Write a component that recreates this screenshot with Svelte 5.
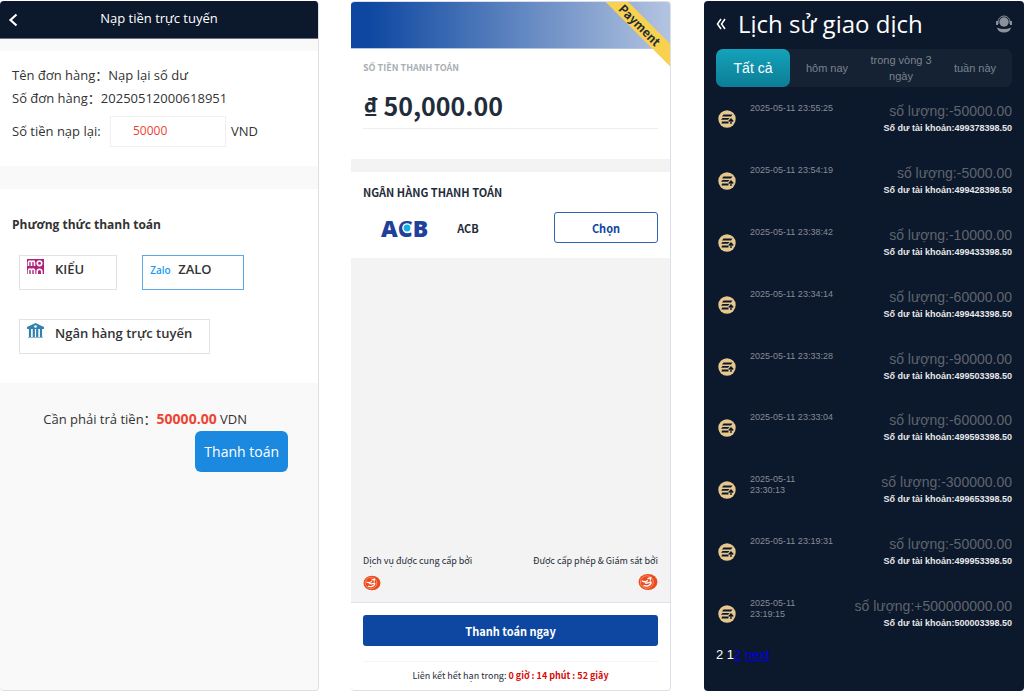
<script>
  const methods = [
    { id: 'momo', label: 'KIỂU' },
    { id: 'zalo', label: 'ZALO' },
    { id: 'bank', label: 'Ngân hàng trực tuyến' }
  ];

  const tabs = ['Tất cả', 'hôm nay', 'trong vòng 3 ngày', 'tuần này'];

  const history = [
    { time: '2025-05-11 23:55:25', amount: '-50000.00', balance: '499378398.50' },
    { time: '2025-05-11 23:54:19', amount: '-5000.00', balance: '499428398.50' },
    { time: '2025-05-11 23:38:42', amount: '-10000.00', balance: '499433398.50' },
    { time: '2025-05-11 23:34:14', amount: '-60000.00', balance: '499443398.50' },
    { time: '2025-05-11 23:33:28', amount: '-90000.00', balance: '499503398.50' },
    { time: '2025-05-11 23:33:04', amount: '-60000.00', balance: '499593398.50' },
    { time: '2025-05-11 23:30:13', amount: '-300000.00', balance: '499653398.50' },
    { time: '2025-05-11 23:19:31', amount: '-50000.00', balance: '499953398.50' },
    { time: '2025-05-11 23:19:15', amount: '+500000000.00', balance: '500003398.50' }
  ];

  let amount = $state('50000');
  let method = $state('zalo');
  let tab = $state(0);
</script>

{#snippet seal(size)}
  <svg width={size} height={size - 2} viewBox="0 0 18 16" aria-hidden="true">
    <ellipse cx="9" cy="8" rx="8.500" ry="7.300" fill="#ea4a1c" />
    <ellipse cx="8" cy="8" rx="5.800" ry="5.600" fill="none" stroke="#f7a688" stroke-width="0.700" />
    <path d="M3.500 7c2 1.200 4 .6 5.500-.6M8.500 5l3-.8-.5 2.500M6 8.500c2 .8 4 .4 6-.8M5 11c2.500 1.200 6 .8 7-2.500" fill="none" stroke="#fff" stroke-width="1.200" />
  </svg>
{/snippet}

<main class="screens">
  <section class="panel recharge">
    <header class="bar">
      <button type="button" class="back" aria-label="Quay lại">
        <svg width="10" height="14" viewBox="0 0 10 14"><path d="M8.500 1.500 2.500 7l6 5.500" fill="none" stroke="#fff" stroke-width="2.200" /></svg>
      </button>
      <h1>Nạp tiền trực tuyến</h1>
    </header>

    <div class="block order">
      <p class="line"><span>Tên đơn hàng：</span><span>Nạp lại số dư</span></p>
      <p class="line"><span>Số đơn hàng：</span><span>20250512000618951</span></p>
      <div class="line money">
        <label for="amount">Số tiền nạp lại:</label>
        <input id="amount" type="text" bind:value={amount} />
        <span>VND</span>
      </div>
    </div>

    <div class="block methods">
      <h2>Phương thức thanh toán</h2>
      <div class="options">
        {#each methods as m}
          <button type="button" class="option" class:selected={method === m.id} aria-pressed={method === m.id} onclick={() => (method = m.id)}>
            <span class="logo">
              {#if m.id === 'momo'}
                <svg width="17" height="15" viewBox="0 0 17 15" aria-hidden="true">
                  <rect width="17" height="15" fill="#b0227a" />
                  <g fill="none" stroke="#fff" stroke-width="1.600">
                    <path d="M1.500 7V3.500q0-1.500 1.500-1.500t1.500 1.500V7M4.500 3.500Q4.500 2 6 2t1.500 1.500V7M1.500 15v-3.500q0-1.500 1.500-1.500t1.500 1.500V15M4.500 11.500q0-1.500 1.500-1.500t1.500 1.500V15" />
                    <circle cx="12.500" cy="4.300" r="2.300" />
                    <path d="M10.200 15v-2.500a2.300 2.300 0 0 1 4.600 0V15" />
                  </g>
                </svg>
              {:else if m.id === 'zalo'}
                <span class="zalo">Zalo</span>
              {:else}
                <svg width="17" height="15" viewBox="0 0 17 15" aria-hidden="true">
                  <path d="M8.500 0 17 4v2H0V4z" fill="#3382ad" />
                  <path d="M3 5v9M6.800 5v9M10.200 5v9M14 5v9" stroke="#3382ad" stroke-width="2.200" />
                  <path d="M1 14.500h15" stroke="#8fb9d0" />
                  <circle cx="8.500" cy="3.500" r="1.300" fill="#fff" />
                </svg>
              {/if}
            </span>
            {m.label}
          </button>
        {/each}
      </div>
    </div>

    <div class="total">
      <p>Cần phải trả tiền：<strong>50000.00</strong> VDN</p>
      <button type="button" class="submit">Thanh toán</button>
    </div>
  </section>

  <section class="panel checkout">
    <div class="banner">
      <div class="ribbon">Payment</div>
    </div>

    <div class="block sum">
      <h2>SỐ TIỀN THANH TOÁN</h2>
      <p class="price">₫ 50,000.00</p>
    </div>

    <div class="block bank">
      <h2>NGÂN HÀNG THANH TOÁN</h2>
      <div class="bank-row">
        <div class="acb">
          ACB
          <svg class="acb-dot" width="10" height="10" viewBox="0 0 10 10" aria-hidden="true">
            <circle cx="5" cy="5" r="4.800" fill="#fff" />
            <circle cx="5" cy="5" r="3.400" fill="#12aeea" />
          </svg>
        </div>
        <span class="bank-name">ACB</span>
        <button type="button" class="choose">Chọn</button>
      </div>
    </div>

    <div class="providers">
      <div class="provider">
        <span>Dịch vụ được cung cấp bởi</span>
        {@render seal(18)}
      </div>
      <div class="provider right">
        <span>Được cấp phép &amp; Giám sát bởi</span>
        {@render seal(20)}
      </div>
    </div>

    <footer class="pay">
      <button type="button" class="pay-now">Thanh toán ngay</button>
      <p class="expires">Liên kết hết hạn trong: <strong>0 giờ : 14 phút : 52 giây</strong></p>
    </footer>
  </section>

  <section class="panel history">
    <header class="top">
      <button type="button" class="back" aria-label="Quay lại">
        <svg width="10" height="14" viewBox="0 0 10 14"><path d="M5 2 1.500 7 5 12M9 2 5.500 7 9 12" fill="none" stroke="#fff" stroke-width="1.500" /></svg>
      </button>
      <h1>Lịch sử giao dịch</h1>
      <button type="button" class="support" aria-label="Hỗ trợ">
        <svg width="16" height="18" viewBox="0 0 16 18">
          <circle cx="8" cy="7" r="4.700" fill="#8b919b" />
          <path d="M2 9V7a6 6 0 0 1 12 0v2" fill="none" stroke="#8b919b" />
          <path d="M0 6h2v4H0zM14 6h2v4h-2zM1 12.500q7 3 14 0-1 5-7 5t-7-5" fill="#8b919b" />
        </svg>
      </button>
    </header>

    <nav class="tabs">
      {#each tabs as label, i}
        <button type="button" class="tab" class:active={tab === i} onclick={() => (tab = i)}>{label}</button>
      {/each}
    </nav>

    <ul class="records">
      {#each history as item}
        <li class="record">
          <svg class="coin" width="18" height="18" viewBox="0 0 18 18" aria-hidden="true">
            <circle cx="9" cy="9" r="8.700" fill="#e6c88f" />
            <path d="M5.500 4.500h9l-1.500 2H4zM4.500 8h7l-1.500 1.800H3zM4 11.500h6.500v2H3.500z" fill="#0c182b" />
            <path d="M13 14V9.500M10.800 11.500 13 9l2.200 2.500" fill="none" stroke="#0c182b" stroke-width="1.400" />
          </svg>
          <time>{item.time}</time>
          <div class="figures">
            <span class="amount">số lượng:{item.amount}</span>
            <span class="balance">Số dư tài khoản:{item.balance}</span>
          </div>
        </li>
      {/each}
    </ul>

    <div class="pager">2 1<a href="#2">2</a> <a href="#next">next</a></div>
  </section>
</main>

<style>
  :global(body) {
    margin: 0;
    background: #fff;
  }

  h1,
  h2,
  p,
  ul {
    margin: 0;
    padding: 0;
  }

  button,
  input {
    font-family: inherit;
    box-sizing: border-box;
    margin: 0;
  }

  button {
    cursor: pointer;
  }

  svg {
    display: block;
    flex: none;
  }

  .screens {
    display: grid;
    grid-template-columns: repeat(3, minmax(0, 1fr));
    gap: 32px;
    min-height: 100vh;
    box-sizing: border-box;
    padding: 1px 0 2px;
  }

  .panel {
    display: flex;
    flex-direction: column;
    box-sizing: border-box;
    border-radius: 4px;
    overflow: hidden;
  }

  .block {
    background: #fff;
  }

  .back,
  .support {
    background: none;
    border: none;
    padding: 0;
  }

  /* recharge form */
  .recharge {
    margin-right: 1px;
    background: #f9f9f9;
    border-right: 1px solid #dedfe5;
    border-bottom: 1px solid #dedfe5;
    font-family: 'Open Sans', 'Noto Sans CJK SC', sans-serif;
    font-size: 13px;
    line-height: 23px;
    color: #333;
  }

  .bar {
    display: grid;
    grid-template-columns: 10px 1fr 10px;
    align-items: center;
    height: 37px;
    padding: 0 8px;
    background: #0c182b;
    border-bottom: 1px solid #6d7480;
    margin-bottom: 12px;
  }

  .bar h1 {
    padding-bottom: 2px;
    font-size: 13px;
    font-weight: 400;
    color: #fff;
    text-align: center;
  }

  .order {
    padding: 13px 12px 19px;
    margin-bottom: 23px;
  }

  .line {
    display: flex;
    align-items: center;
  }

  .money {
    margin-top: 6px;
    gap: 5px;
  }

  .money label {
    min-width: 93px;
  }

  .money input {
    width: 116px;
    height: 31px;
    padding: 0 22px 3px;
    border: 1px solid #f0f0f0;
    font-size: 12px;
    color: #ee4433;
    outline: none;
  }

  .methods {
    padding: 24px 12px 29px;
  }

  .methods h2 {
    font-size: 12px;
    font-weight: 700;
  }

  .options {
    display: flex;
    flex-wrap: wrap;
    gap: 29px 25px;
    padding: 19px 7px 0;
  }

  .option {
    display: flex;
    align-items: flex-start;
    height: 35px;
    padding: 3px 17px 0 7px;
    background: #fff;
    border: 1px solid #e2e2e2;
    font-size: 13px;
    font-weight: 600;
    line-height: 21px;
    color: #333;
  }

  .option:first-child {
    padding-right: 32px;
  }

  .option.selected {
    padding-right: 31px;
    border-color: #5aa9e6;
  }

  .logo {
    width: 28px;
    text-align: left;
  }

  .zalo {
    font-size: 10px;
    color: #1b9af0;
  }

  .total {
    display: flex;
    flex-direction: column;
    align-items: flex-end;
    padding: 24px 30px 0;
  }

  .total p {
    margin-right: 41px;
  }

  .total strong {
    font-size: 14px;
    color: #ee4433;
  }

  .submit {
    height: 41px;
    padding: 0 9px;
    background: #1b89e0;
    border: none;
    border-radius: 6px;
    font-size: 14px;
    color: #fff;
  }

  /* bank checkout */
  .checkout {
    position: relative;
    background: #f3f3f3;
    border: 1px solid #dcdfe8;
    border-left: none;
    margin-left: -1px;
    margin-right: 1px;
    font-family: 'Noto Sans CJK SC', sans-serif;
    font-size: 9px;
    line-height: 16px;
    color: #1f2d3a;
  }

  .banner {
    height: 46px;
    background: linear-gradient(90deg, #0d47a1 5%, #b3c4e0);
    border-bottom: 1px solid #b6c5e2;
  }

  .ribbon {
    position: absolute;
    top: 15px;
    right: -33px;
    width: 126px;
    transform: rotate(45deg);
    background: #f8d24e;
    text-align: center;
    font-size: 12px;
    font-weight: 700;
    line-height: 16px;
  }

  .sum {
    padding: 11px 12px 30px;
    margin-bottom: 13px;
  }

  .sum h2 {
    font-size: 9px;
    color: #a9afb5;
  }

  .price {
    padding: 13px 0 7px;
    border-bottom: 1px solid #eee;
    font-size: 25px;
    font-weight: 700;
    line-height: 32px;
  }

  .bank {
    padding: 12px 12px 15px;
  }

  .bank h2 {
    font-size: 11px;
    font-weight: 700;
  }

  .bank-row {
    display: flex;
    align-items: center;
    margin-top: 12px;
    padding-left: 18px;
  }

  .acb {
    position: relative;
    min-width: 47px;
    font-family: 'Open Sans', sans-serif;
    font-size: 23px;
    font-weight: 800;
    line-height: 30px;
    color: #21409a;
  }

  .acb-dot {
    position: absolute;
    top: 10px;
    left: 21px;
  }

  .bank-name {
    flex: 1;
    margin-left: 29px;
    font-size: 11px;
    font-weight: 700;
  }

  .choose {
    min-width: 104px;
    height: 31px;
    background: #fff;
    border: 1px solid #2f62b0;
    border-radius: 3px;
    font-size: 11px;
    font-weight: 700;
    color: #0d47a1;
  }

  .providers {
    display: flex;
    flex: 1;
    align-items: flex-end;
    justify-content: space-between;
    padding: 0 12px 11px;
  }

  .provider {
    display: flex;
    flex-direction: column;
    gap: 6px;
  }

  .provider.right {
    align-items: flex-end;
    gap: 4px;
  }

  .pay {
    padding: 12px 12px 6px;
    background: #fff;
    border-top: 1px solid #dbe3f0;
  }

  .pay-now {
    display: block;
    width: 100%;
    height: 31px;
    background: #0d47a1;
    border: none;
    border-radius: 3px;
    font-size: 11px;
    font-weight: 700;
    color: #fff;
  }

  .expires {
    margin-top: 15px;
    padding-top: 6px;
    border-top: 1px solid #f5f5f5;
    text-align: center;
  }

  .expires strong {
    color: #d80b0b;
  }

  /* transaction history */
  .history {
    padding: 0 12px;
    background: #0c182b;
    font-family: 'Liberation Sans', Arial, sans-serif;
    color: #fff;
  }

  .top {
    display: flex;
    align-items: center;
    height: 46px;
    margin-bottom: 2px;
  }

  .top h1 {
    flex: 1;
    margin-left: 12px;
    font-family: 'Open Sans', 'Noto Sans', sans-serif;
    font-size: 24px;
    font-weight: 400;
    line-height: 32px;
  }

  .tabs {
    display: grid;
    grid-template-columns: repeat(4, 1fr);
    height: 38px;
    background: #142234;
    border-radius: 7px;
  }

  .tab {
    padding: 0 4px;
    background: none;
    border: none;
    border-radius: 7px;
    font-size: 11px;
    line-height: 16px;
    color: #7c838d;
  }

  .tab.active {
    background: linear-gradient(#14a3bb, #0c7d96);
    font-size: 14px;
    color: #fff;
  }

  .records {
    display: flex;
    flex: 1;
    flex-direction: column;
    padding-top: 15px;
    list-style: none;
  }

  .record {
    display: flex;
    flex: 1;
    align-items: flex-start;
  }

  .record:last-child {
    flex: none;
    min-height: 50px;
  }

  .coin {
    margin: 8px 14px 0 2px;
  }

  time {
    padding-top: 1px;
    font-size: 9px;
    line-height: 11px;
    color: #868c96;
  }

  .figures {
    display: flex;
    flex: none;
    flex-direction: column;
    align-items: flex-end;
    margin-left: auto;
    padding-left: 50px;
  }

  .amount {
    font-size: 14px;
    line-height: 18px;
    color: #5f656e;
  }

  .balance {
    font-size: 9px;
    font-weight: 700;
    line-height: 16px;
    color: #e6e8ea;
  }

  .pager {
    padding: 0 0 28px;
    font-size: 13px;
    line-height: 16px;
  }

  .pager a {
    color: #0000ee;
  }
</style>
